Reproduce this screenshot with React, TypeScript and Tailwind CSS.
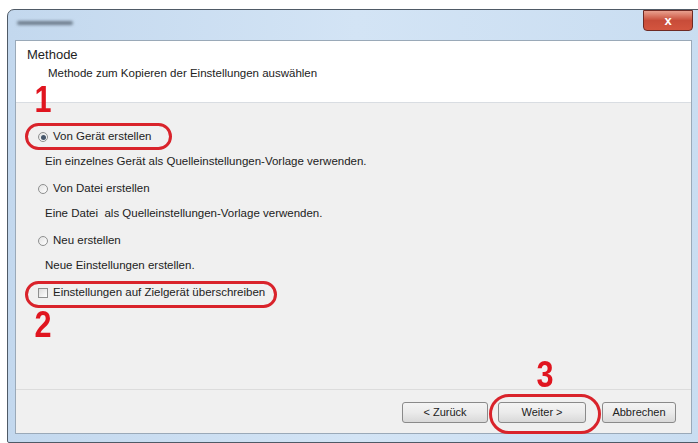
import React from "react";

const font = { fontFamily: '"Liberation Sans", Arial, sans-serif' };

function Radio({ checked }: { checked?: boolean }) {
  return (
    <span className="w-[10px] h-[10px] rounded-full border border-[#8e8f8f] bg-gradient-to-br from-[#e2e2e2] to-white flex items-center justify-center shrink-0">
      {checked && <span className="w-[5px] h-[5px] rounded-full bg-[#46566a]" />}
    </span>
  );
}

function Btn({ children, w }: { children: React.ReactNode; w: string }) {
  return (
    <div
      className={`${w} h-[21px] rounded-[3px] border border-[#8a8a8a] bg-gradient-to-b from-[#f4f4f4] via-[#ebebeb] to-[#d9d9d9] flex items-center justify-center text-[11px] text-[#222]`}
    >
      {children}
    </div>
  );
}

function Label({ children }: { children: React.ReactNode }) {
  return <div className="h-[24px] flex items-center gap-[5px]">{children}</div>;
}

function Desc({ children }: { children: React.ReactNode }) {
  return <div className="h-[28px] pt-[5px] pl-[7px] leading-[14px]">{children}</div>;
}

export default function App() {
  return (
    <div className="w-[698px] h-[443px] bg-white relative overflow-hidden" style={font}>
      <div className="ml-[7px] mt-[9px] w-[700px] h-[434px] rounded-t-[7px] rounded-b-[2px] border border-[#4f5a66] bg-gradient-to-r from-[#c3d8ee] via-[#d3e4f5] to-[#c9ddf1] flex flex-col">
        {/* title bar */}
        <div className="h-[30px] flex items-start shrink-0 relative">
          <div className="mt-[11px] ml-[9px] w-[56px] h-[4px] bg-[#6d7c8c] blur-[1.5px] rounded" />
          <div className="absolute left-[635px] top-0 w-[50px] h-[21px] rounded-b-[4px] border border-[#6e2a24] bg-gradient-to-b from-[#e8a08f] via-[#c84c39] to-[#d3553f] flex items-center justify-center">
            <span className="text-white text-[13px] font-bold leading-none">x</span>
          </div>
        </div>
        {/* client */}
        <div className="ml-[7px] w-[677px] h-[394px] border border-[#9aa9b8] bg-[#f0f0f0] flex flex-col">
          {/* header */}
          <div className="h-[62px] bg-white border-b border-[#d9dde2] shrink-0 pt-[6px]">
            <div className="pl-[11px] text-[13px] text-[#1e1e1e] leading-[16px]">Methode</div>
            <div className="pl-[32px] mt-[3px] text-[11.5px] text-[#222] leading-[14px]">
              Methode zum Kopieren der Einstellungen auswählen
            </div>
          </div>
          {/* body */}
          <div className="flex-1 pt-[22px] pl-[22px] text-[11.5px] text-[#222]">
            <Label>
              <Radio checked />
              <span>Von Gerät erstellen</span>
            </Label>
            <Desc>Ein einzelnes Gerät als Quelleinstellungen-Vorlage verwenden.</Desc>
            <Label>
              <Radio />
              <span>Von Datei erstellen</span>
            </Label>
            <Desc>Eine Datei&nbsp; als Quelleinstellungen-Vorlage verwenden.</Desc>
            <Label>
              <Radio />
              <span>Neu erstellen</span>
            </Label>
            <Desc>Neue Einstellungen erstellen.</Desc>
            <Label>
              <span className="w-[10px] h-[10px] border border-[#8e8f8f] bg-gradient-to-br from-[#dcdcdc] to-white shrink-0" />
              <span>Einstellungen auf Zielgerät überschreiben</span>
            </Label>
          </div>
          {/* footer */}
          <div className="h-[44px] border-t border-[#dcdcdc] shrink-0 flex items-center justify-end pr-[15px] pt-[1px]">
            <Btn w="w-[86px]">&lt; Zurück</Btn>
            <div className="ml-[10px]">
              <Btn w="w-[88px]">Weiter &gt;</Btn>
            </div>
            <div className="ml-[16px]">
              <Btn w="w-[74px]">Abbrechen</Btn>
            </div>
          </div>
        </div>
      </div>

      {/* annotations */}
      <div className="absolute left-[33px] top-[82px] text-[36px] font-bold text-[#e0151f] leading-none scale-x-[0.85]">1</div>
      <div className="absolute left-[25px] top-[123px] w-[147px] h-[27px] rounded-full border-[3px] border-[#d9232b]" />
      <div className="absolute left-[25px] top-[281px] w-[252px] h-[27px] rounded-full border-[3px] border-[#d9232b]" />
      <div className="absolute left-[33px] top-[307px] text-[36px] font-bold text-[#e0151f] leading-none scale-x-[0.85]">2</div>
      <div className="absolute left-[535px] top-[357px] text-[36px] font-bold text-[#e0151f] leading-none scale-x-[0.85]">3</div>
      <div className="absolute left-[489px] top-[394px] w-[112px] h-[40px] rounded-full border-[3px] border-[#d9232b]" />
    </div>
  );
}
